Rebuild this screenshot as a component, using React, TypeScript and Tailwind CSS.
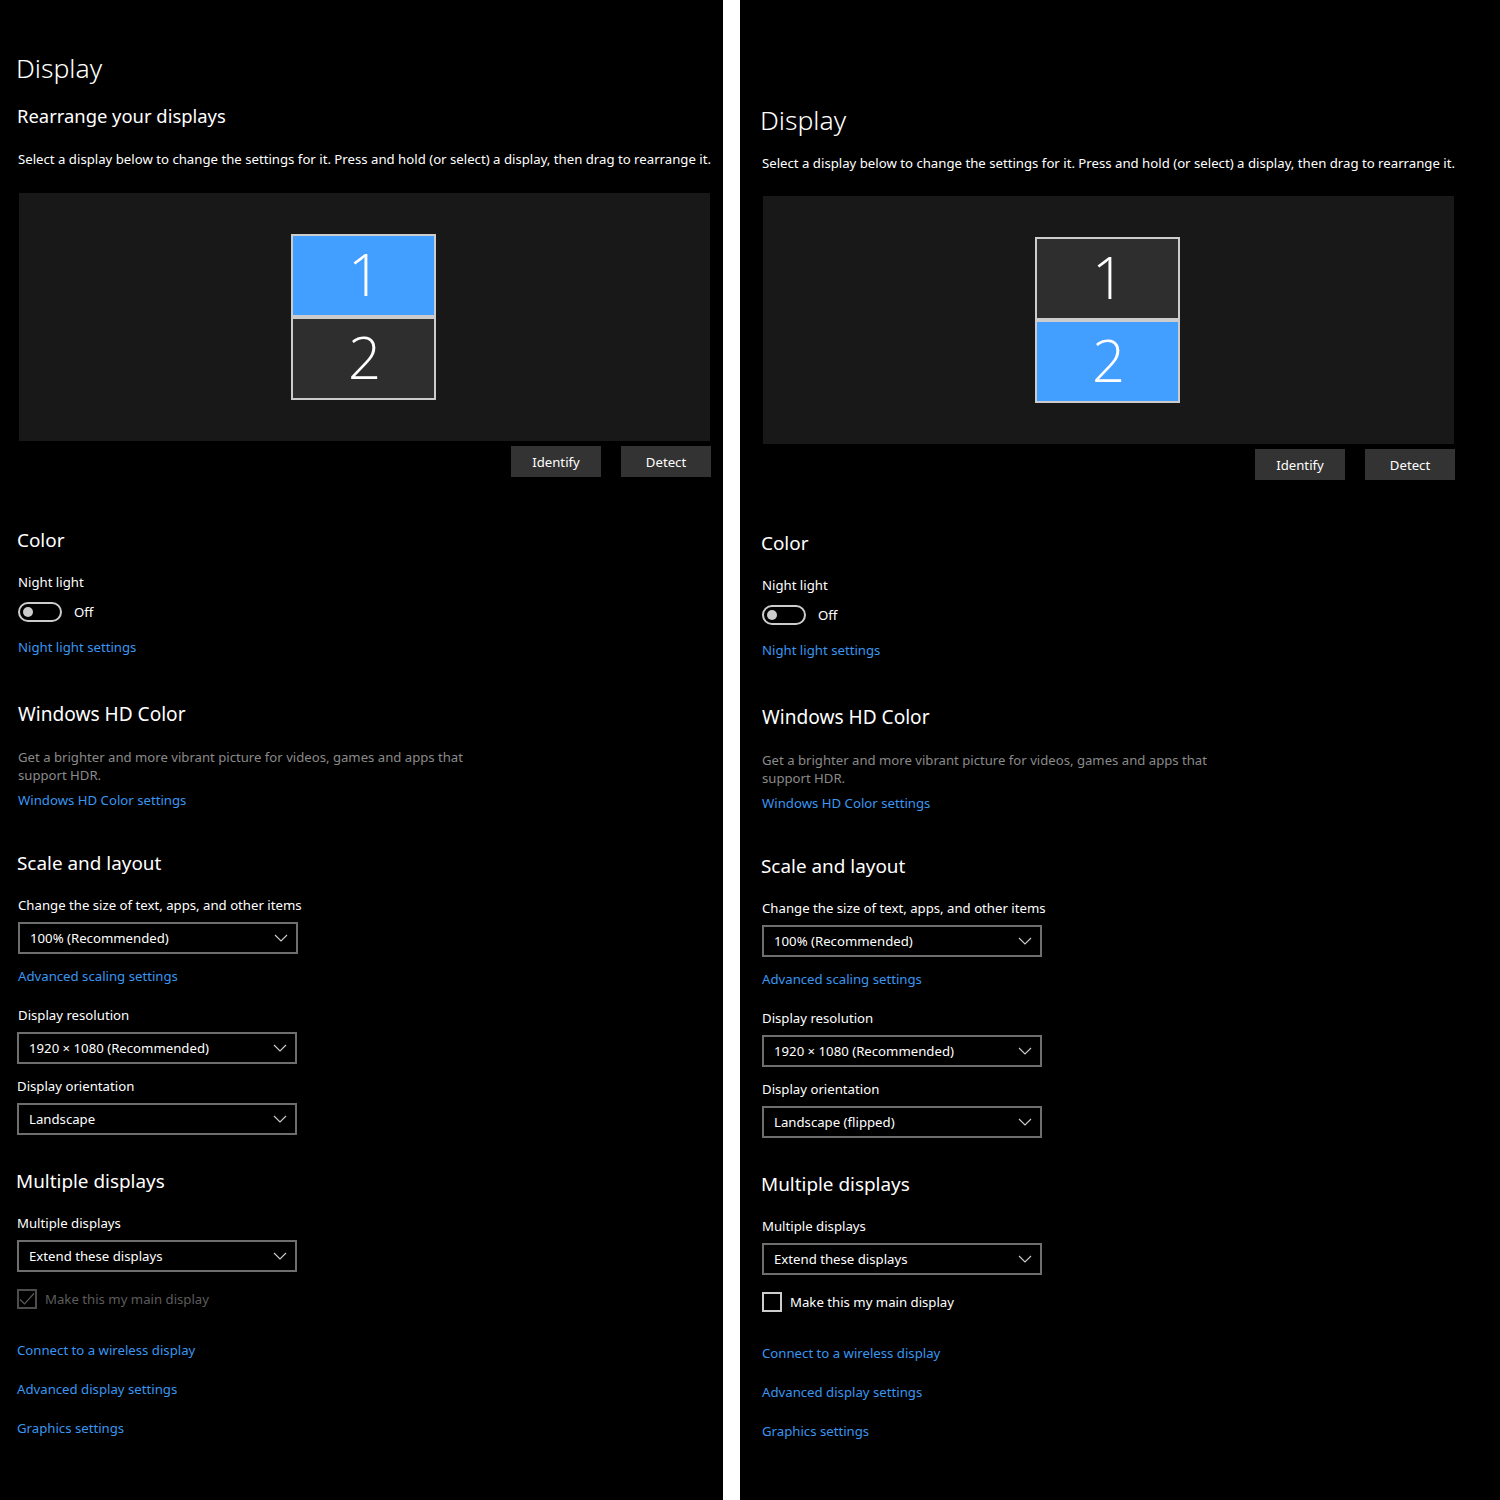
const links = ['Connect to a wireless display', 'Advanced display settings', 'Graphics settings'];

function Monitor({ n, active }: { n: number; active: boolean }) {
  return (
    <div className={`w-[145px] h-[83px] border-2 border-[#cccccc] pb-[3px] pl-[2px] flex items-center justify-center ${active ? 'bg-[#429eff]' : 'bg-[#2e2e2e]'}`}>
      <span className="text-[58px] leading-none font-light text-white font-['Open_Sans',sans-serif]">{n}</span>
    </div>
  );
}

function Heading({ children, className = '' }: { children: React.ReactNode; className?: string }) {
  return <h2 className={`h-7 leading-7 text-[18.9px] text-white -ml-px ${className}`}>{children}</h2>;
}

function Line({ children, className = '' }: { children: React.ReactNode; className?: string }) {
  return <div className={`h-5 leading-5 text-[13.2px] text-white ${className}`}>{children}</div>;
}

function LinkLine({ children, className = '' }: { children: React.ReactNode; className?: string }) {
  return <a className={`block h-5 leading-5 text-[13.2px] text-[#3a96f0] ${className}`}>{children}</a>;
}

function Dropdown({ value, className = '' }: { value: string; className?: string }) {
  return (
    <div className={`w-[280px] h-8 border-2 border-[#6e6e6e] pl-[10px] pr-[3px] flex items-center justify-between text-[13.2px] text-white ${className}`}>
      <span className="mt-[2px]">{value}</span>
      <svg width="24" height="24" viewBox="0 0 24 24" fill="none" stroke="#cfcfcf" strokeWidth="1.1">
        <path d="M6 9 L12 15 L18 9" />
      </svg>
    </div>
  );
}

function Panel({ side }: { side: 'left' | 'right' }) {
  const left = side === 'left';
  return (
    <section className={`h-[1500px] bg-black overflow-hidden font-['Noto_Sans',sans-serif] ${left ? 'w-[723px] pl-[18px] pt-[48px]' : 'flex-1 pl-[22px] pt-[100px]'}`}>
      <h1 className="h-10 leading-10 text-[26.5px] font-light text-white -ml-[2px]">Display</h1>
      {left && <h2 className="mt-[14px] h-7 leading-7 text-[18.4px] text-white -ml-px">Rearrange your displays</h2>}
      <Line className={`whitespace-nowrap ${left ? 'mt-[19px]' : 'mt-[13px]'}`}>
        Select a display below to change the settings for it. Press and hold (or select) a display, then drag to rearrange it.
      </Line>

      <div className={`ml-px w-[691px] h-[248px] bg-[#181818] pr-[2px] flex flex-col items-center justify-center ${left ? 'mt-[24px]' : 'mt-[23px]'}`}>
        <Monitor n={1} active={left} />
        <Monitor n={2} active={!left} />
      </div>
      <div className="ml-px w-[692px] mt-[5px] flex justify-end gap-5">
        <button className="w-[90px] h-[31px] pt-[2px] bg-[#333333] text-[13.2px] text-white">Identify</button>
        <button className="w-[90px] h-[31px] pt-[2px] bg-[#333333] text-[13.2px] text-white">Detect</button>
      </div>

      <Heading className="mt-[49px]">Color</Heading>
      <Line className="mt-[18px]">Night light</Line>
      <div className="mt-[10px] h-5 flex items-center gap-3">
        <div className="w-11 h-5 rounded-full border-2 border-[#cccccc] flex items-center pl-[3px]">
          <div className="w-[10px] h-[10px] rounded-full bg-[#cccccc]" />
        </div>
        <span className="mt-[2px] text-[13.2px] text-white">Off</span>
      </div>
      <LinkLine className="mt-[15px]">Night light settings</LinkLine>

      <h2 className="mt-[43px] h-7 leading-7 text-[19.1px] text-white">Windows HD Color</h2>
      <p className="mt-[20px] w-[480px] text-[13.15px] leading-[18px] text-[#8a8a8a]">
        Get a brighter and more vibrant picture for videos, games and apps that support HDR.
      </p>
      <LinkLine className="mt-[6px]">Windows HD Color settings</LinkLine>

      <Heading className="mt-[39px]">Scale and layout</Heading>
      <Line className="mt-[18px]">Change the size of text, apps, and other items</Line>
      <Dropdown value="100% (Recommended)" className="mt-[7px]" />
      <LinkLine className="mt-[12px]">Advanced scaling settings</LinkLine>
      <Line className="mt-[19px]">Display resolution</Line>
      <div className={left ? '-ml-px' : ''}>
        <Dropdown value="1920 × 1080 (Recommended)" className="mt-[7px]" />
        <Line className="mt-[12px]">Display orientation</Line>
        <Dropdown value={left ? 'Landscape' : 'Landscape (flipped)'} className="mt-[7px]" />

        <Heading className="mt-[32px]">Multiple displays</Heading>
        <Line className="mt-[18px]">Multiple displays</Line>
        <Dropdown value="Extend these displays" className="mt-[7px]" />
        <div className="mt-[17px] h-5 flex items-center gap-2">
          <div className={`w-5 h-5 border-2 flex items-center justify-center ${left ? 'border-[#4d4d4d]' : 'border-[#cccccc]'}`}>
            {left && (
              <svg width="16" height="16" viewBox="0 0 16 16" fill="none" stroke="#5a5a5a" strokeWidth="1.2">
                <path d="M1 8.5 L5.5 13 L15 2.5" />
              </svg>
            )}
          </div>
          <span className={`mt-[2px] text-[13.2px] ${left ? 'text-[#5c5c5c]' : 'text-white'}`}>Make this my main display</span>
        </div>

        <div className="mt-[31px] flex flex-col gap-[19px]">
          {links.map((l) => (
            <LinkLine key={l}>{l}</LinkLine>
          ))}
        </div>
      </div>
    </section>
  );
}

export default function App() {
  return (
    <div className="w-[1500px] h-[1500px] bg-white flex gap-[17px]">
      <Panel side="left" />
      <Panel side="right" />
    </div>
  );
}
